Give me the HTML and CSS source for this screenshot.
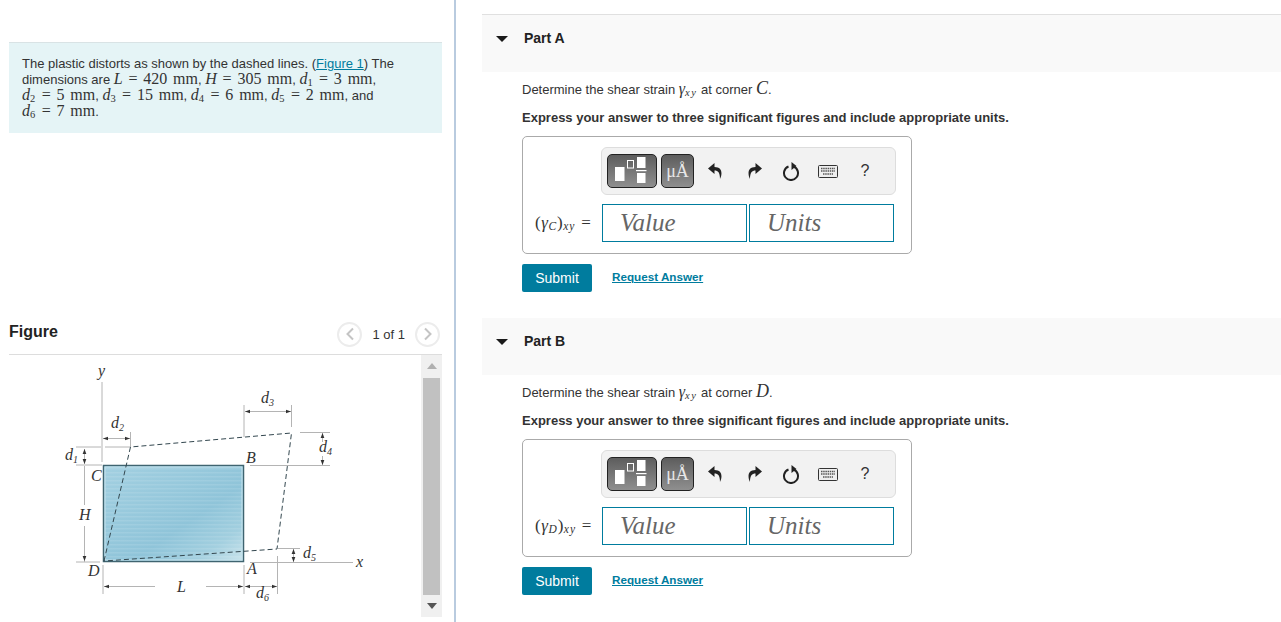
FILE: index.html
```html
<!DOCTYPE html>
<html lang="en">
<head>
<meta charset="utf-8">
<title>Shear strain problem</title>
<link rel="stylesheet" href="styles.css">
</head>
<body>
<div class="page">
  <section class="left">
    <div class="intro">The plastic distorts as shown by the dashed lines. (<a href="#">Figure 1</a>) The<br>dimensions are <span class="m"><i>L</i> = 420 mm</span>, <span class="m"><i>H</i> = 305 mm</span>, <span class="m"><i>d</i><sub>1</sub> = 3 mm</span>,<br><span class="m"><i>d</i><sub>2</sub> = 5 mm</span>, <span class="m"><i>d</i><sub>3</sub> = 15 mm</span>, <span class="m"><i>d</i><sub>4</sub> = 6 mm</span>, <span class="m"><i>d</i><sub>5</sub> = 2 mm</span>, and<br><span class="m"><i>d</i><sub>6</sub> = 7 mm</span>.</div>
    <div class="fig-head">
      <h2>Figure</h2>
      <div class="pager">
        <span class="pg"><svg width="10" height="14" viewBox="0 0 10 14"><path d="M8 1.500 2.500 7 8 12.500" fill="none" stroke="#c4c4c4" stroke-width="2"/></svg></span>
        <span class="pg-text">1 of 1</span>
        <span class="pg"><svg width="10" height="14" viewBox="0 0 10 14"><path d="M2 1.500 7.500 7 2 12.500" fill="none" stroke="#c4c4c4" stroke-width="2"/></svg></span>
      </div>
    </div>
    <div class="fig-body">
      <svg class="figure" width="412" height="267" viewBox="9 355 412 267">
        <defs>
          <linearGradient id="plate" x1="0" y1="0" x2="1" y2="1">
            <stop offset="0" stop-color="#a3d0e1"/>
            <stop offset=".6" stop-color="#8fc4d9"/>
            <stop offset=".82" stop-color="#a2cfdf"/>
            <stop offset="1" stop-color="#cbe4ec"/>
          </linearGradient>
          <pattern id="stripes" width="4" height="4" patternUnits="userSpaceOnUse"><rect width="4" height="1.500" fill="#fff" opacity=".1"/></pattern>
          <marker id="ar" viewBox="0 0 6 6" refX="6" refY="3" markerWidth="5" markerHeight="5" markerUnits="userSpaceOnUse" orient="auto-start-reverse"><path d="M0 .8 6 3 0 5.200z" fill="#333"/></marker>
        </defs>
        <rect x="103.500" y="465.500" width="140" height="96" fill="url(#plate)" stroke="#3f6470" stroke-width="1.500"/>
        <rect x="105" y="467" width="137" height="93" fill="url(#stripes)" stroke="#c5e2ec" stroke-width="1"/>
        <g class="thin">
          <path d="M102 382V462M76 447H101M105 447H130M76 465H102M76 562H100M84.500 466V505M84.500 526V562"/>
          <path d="M130.500 432V447M103 565V594M244 565V594M277.500 556V594M244 405V437M291.500 405V427M300 432.500H330M250 465.500H330M278 548.500H300M250 562.500H353"/>
          <path marker-start="url(#ar)" marker-end="url(#ar)" d="M103 438.500H130"/>
          <path marker-end="url(#ar)" d="M84.500 456V449"/>
          <path marker-end="url(#ar)" d="M84.500 456V464"/>
          <path marker-end="url(#ar)" d="M84.500 545V561"/>
          <path marker-end="url(#ar)" d="M155 586.500H104"/>
          <path marker-end="url(#ar)" d="M206 586.500H243"/>
          <path marker-start="url(#ar)" marker-end="url(#ar)" d="M245 586.500H277"/>
          <path marker-start="url(#ar)" marker-end="url(#ar)" d="M245 411.500H291"/>
          <path marker-end="url(#ar)" d="M322.500 442V433"/>
          <path marker-end="url(#ar)" d="M322.500 456V465"/>
          <path marker-start="url(#ar)" marker-end="url(#ar)" d="M293.500 549V562"/>
        </g>
        <path class="dash" d="M104 561 130.500 447 291.500 433 277 549Z"/>
        <g class="lab">
          <text x="98" y="376">y</text>
          <text x="111" y="428">d<tspan class="s" dy="3">2</tspan></text>
          <text x="65" y="460">d<tspan class="s" dy="3">1</tspan></text>
          <text x="91" y="481">C</text>
          <text x="79" y="520">H</text>
          <text x="88" y="576">D</text>
          <text x="177" y="592">L</text>
          <text x="261" y="403">d<tspan class="s" dy="3">3</tspan></text>
          <text x="319" y="452">d<tspan class="s" dy="3">4</tspan></text>
          <text x="246" y="463">B</text>
          <text x="303" y="558">d<tspan class="s" dy="3">5</tspan></text>
          <text x="247" y="574">A</text>
          <text x="256" y="598">d<tspan class="s" dy="3">6</tspan></text>
          <text x="356" y="567">x</text>
        </g>
      </svg>
      <div class="scroll">
        <span class="sc-btn"><svg width="12" height="6" viewBox="0 0 12 6"><path d="M1 6 6 0l5 6z" fill="#b0b0b0"/></svg></span>
        <span class="thumb"></span>
        <span class="sc-btn"><svg width="12" height="6" viewBox="0 0 12 6"><path d="M1 0h10L6 6z" fill="#555"/></svg></span>
      </div>
    </div>
  </section>
  <main class="right">
    <article class="part">
      <header class="part-head first"><svg width="12" height="6" viewBox="0 0 12 6"><path d="M0 0h12L6 6z" fill="#1a1a1a"/></svg><h3>Part A</h3></header>
      <div class="part-body">
        <p class="q">Determine the shear strain <span class="m"><i>γ</i><sub><i>xy</i></sub></span> at corner <span class="m big"><i>C</i></span>.</p>
        <p class="ex">Express your answer to three significant figures and include appropriate units.</p>
        <div class="answer">
          <div class="tools">
            <span class="tb tb-wide"><svg width="36" height="30" viewBox="0 0 36 30"><rect x="1" y="11" width="9.500" height="14" fill="#fff"/><rect x="13.500" y="4.500" width="6" height="7.500" fill="none" stroke="#fff"/><rect x="23" y="1" width="8.500" height="11" fill="#fff"/><rect x="22" y="14" width="10.500" height="1.200" fill="#fff"/><rect x="23" y="17" width="8.500" height="10" fill="#fff"/></svg></span>
            <span class="tb tb-unit">μÅ</span>
            <span class="ic ic-undo"><svg width="14" height="16" viewBox="0 0 14 16"><path d="M6.500 0 0 5.500 6.500 11V7.500c3.500 0 5.500 2 5.500 8.500 2.500-5 2.500-12-5.500-12z" fill="#222"/></svg></span>
            <span class="ic ic-redo"><svg width="14" height="16" viewBox="0 0 14 16"><path d="M7.500 0 14 5.500 7.500 11V7.500c-3.500 0-5.500 2-5.500 8.500C-.5 11-.5 4 7.500 4z" fill="#222"/></svg></span>
            <span class="ic ic-reload"><svg width="18" height="20" viewBox="0 0 18 20"><path d="M6.500 5.500a7 7 0 1 0 5 0" fill="none" stroke="#222" stroke-width="2"/><path d="M9.500 1v8l5-4z" fill="#222"/></svg></span>
            <span class="ic ic-keys"><svg width="20" height="13" viewBox="0 0 20 13"><rect x=".5" y=".5" width="19" height="12" rx="1" fill="#eee" stroke="#333"/><path d="M3 3.500h14M3 6h14M5 9h10" stroke="#555" stroke-width="1.500" stroke-dasharray="1.500 .7"/></svg></span>
            <span class="ic ic-help">?</span>
          </div>
          <div class="inputs">
            <span class="lbl m">(<i>γ</i><sub><i>C</i></sub>)<sub><i>xy</i></sub> =</span>
            <span class="field">Value</span>
            <span class="field">Units</span>
          </div>
        </div>
        <div class="actions"><button class="submit" type="button">Submit</button><a class="req" href="#">Request Answer</a></div>
      </div>
    </article>
    <article class="part">
      <header class="part-head"><svg width="12" height="6" viewBox="0 0 12 6"><path d="M0 0h12L6 6z" fill="#1a1a1a"/></svg><h3>Part B</h3></header>
      <div class="part-body">
        <p class="q">Determine the shear strain <span class="m"><i>γ</i><sub><i>xy</i></sub></span> at corner <span class="m big"><i>D</i></span>.</p>
        <p class="ex">Express your answer to three significant figures and include appropriate units.</p>
        <div class="answer">
          <div class="tools">
            <span class="tb tb-wide"><svg width="36" height="30" viewBox="0 0 36 30"><rect x="1" y="11" width="9.500" height="14" fill="#fff"/><rect x="13.500" y="4.500" width="6" height="7.500" fill="none" stroke="#fff"/><rect x="23" y="1" width="8.500" height="11" fill="#fff"/><rect x="22" y="14" width="10.500" height="1.200" fill="#fff"/><rect x="23" y="17" width="8.500" height="10" fill="#fff"/></svg></span>
            <span class="tb tb-unit">μÅ</span>
            <span class="ic ic-undo"><svg width="14" height="16" viewBox="0 0 14 16"><path d="M6.500 0 0 5.500 6.500 11V7.500c3.500 0 5.500 2 5.500 8.500 2.500-5 2.500-12-5.500-12z" fill="#222"/></svg></span>
            <span class="ic ic-redo"><svg width="14" height="16" viewBox="0 0 14 16"><path d="M7.500 0 14 5.500 7.500 11V7.500c-3.500 0-5.500 2-5.500 8.500C-.5 11-.5 4 7.500 4z" fill="#222"/></svg></span>
            <span class="ic ic-reload"><svg width="18" height="20" viewBox="0 0 18 20"><path d="M6.500 5.500a7 7 0 1 0 5 0" fill="none" stroke="#222" stroke-width="2"/><path d="M9.500 1v8l5-4z" fill="#222"/></svg></span>
            <span class="ic ic-keys"><svg width="20" height="13" viewBox="0 0 20 13"><rect x=".5" y=".5" width="19" height="12" rx="1" fill="#eee" stroke="#333"/><path d="M3 3.500h14M3 6h14M5 9h10" stroke="#555" stroke-width="1.500" stroke-dasharray="1.500 .7"/></svg></span>
            <span class="ic ic-help">?</span>
          </div>
          <div class="inputs">
            <span class="lbl m">(<i>γ</i><sub><i>D</i></sub>)<sub><i>xy</i></sub> =</span>
            <span class="field">Value</span>
            <span class="field">Units</span>
          </div>
        </div>
        <div class="actions"><button class="submit" type="button">Submit</button><a class="req" href="#">Request Answer</a></div>
      </div>
    </article>
  </main>
</div>
</body>
</html>
```
FILE: styles.css
```css
* { box-sizing: border-box; }
html, body { margin: 0; height: 100%; overflow: hidden; background: #fff; }
body { font-family: "Liberation Sans", Arial, sans-serif; font-size: 13px; color: #333; }
.page { display: flex; height: 622px; }
.left { width: 456px; flex: none; padding: 42px 0 0 9px; border-right: 2px solid #b9cbdf; }
.intro { width: 433px; height: 91px; padding: 13px 14px 0 13px; background: #e5f4f6; border-top: 1px solid #d9e3e5; line-height: 16px; color: #333; white-space: nowrap; }
.intro a { color: #007c9e; text-decoration: underline; }
.m { font-family: "Liberation Serif", serif; font-size: 16px; line-height: 14px; word-spacing: 1.800px; color: #333; }
.m sub { font-size: 10.500px; line-height: 0; vertical-align: -2px; letter-spacing: .6px; }
.fig-head { width: 433px; height: 37px; margin-top: 185px; border-bottom: 1px solid #ddd; display: flex; align-items: center; justify-content: space-between; }
.fig-head h2 { margin: 0 0 9px; font-size: 16px; font-weight: 700; color: #222; }
.pager { display: flex; align-items: center; gap: 10px; margin-right: 2px; margin-bottom: 4px; }
.pg { width: 25px; height: 25px; border: 2px solid #ececec; border-radius: 50%; display: flex; align-items: center; justify-content: center; }
.pg-text { font-size: 13px; color: #333; }
.fig-body { display: flex; width: 433px; }
.figure { flex: none; display: block; }
.thin path { fill: none; stroke: #b4b4b4; stroke-width: 1; }
.dash { fill: none; stroke: #33474f; stroke-width: 1; stroke-dasharray: 5 3; }
.lab text { font-family: "Liberation Serif", serif; font-style: italic; font-size: 16px; fill: #333; }
.lab .s { font-size: 10px; }
.scroll { width: 21px; height: 262px; background: #f0f0f0; display: flex; flex-direction: column; align-items: center; }
.sc-btn { flex: 1; min-height: 21px; display: flex; align-items: center; justify-content: center; }
.thumb { flex: none; height: 217px; width: 17px; background: #c1c1c1; }
.right { flex: 1; min-width: 0; padding: 14px 0 0 26px; }
.part-head { height: 57px; background: #f9f9f9; display: flex; align-items: flex-start; padding: 15px 0 0 14px; gap: 16px; }
.part-head.first { height: 58px; border-top: 1px solid #e0e0e0; }
.part-head svg { margin-top: 6px; }
.part-head h3 { margin: 0; font-size: 14px; font-weight: 700; color: #222; line-height: 16px; }
.part-body { padding: 8px 0 0 40px; height: 246px; }
.q { margin: 0; height: 20px; line-height: 20px; white-space: nowrap; }
.q sub { letter-spacing: 1.500px; }
.big { font-size: 18px; }
.ex { margin: 8px 0 0; height: 20px; line-height: 20px; font-weight: 700; white-space: nowrap; }
.answer { width: 390px; height: 118px; margin-top: 8px; border: 1px solid #aaa; border-radius: 5px; padding: 10px 17px 0 12px; }
.tools { width: 295px; height: 48px; margin-left: 66px; background: #f2f2f2; border: 1px solid #ddd; border-radius: 6px; display: flex; align-items: center; padding: 0 5px; }
.tb { height: 34px; border: 1px solid #222; border-radius: 5px; background: linear-gradient(#5d5d5d, #8f8f8f); display: flex; align-items: center; justify-content: center; color: #e8e8e8; }
.tb-wide { width: 50px; }
.tb-unit { width: 33px; margin-left: 4px; font-family: "Liberation Serif", serif; font-size: 18px; }
.ic { display: flex; justify-content: center; align-items: center; flex: none; }
.ic-undo { width: 42px; }
.ic-redo { width: 38px; }
.ic-reload { width: 34px; }
.ic-keys { width: 40px; }
.ic-help { width: 34px; font-size: 16px; color: #333; }
.inputs { display: flex; align-items: center; height: 38px; margin-top: 9px; }
.lbl { width: 67px; flex: none; font-size: 17px; word-spacing: 1px; letter-spacing: .5px; white-space: nowrap; }
.lbl sub { font-size: 11.500px; letter-spacing: 1px; }
.field { flex: none; width: 145px; height: 38px; margin-right: 2px; border: 1px solid #007c9e; padding-left: 17px; font-family: "Liberation Serif", serif; font-style: italic; font-size: 25px; line-height: 36px; color: #666; }
.actions { display: flex; align-items: center; margin-top: 10px; gap: 20px; }
.submit { width: 70px; height: 28px; border: 0; border-radius: 2px; background: #007c9e; color: #fff; font: 14px "Liberation Sans", Arial, sans-serif; padding: 0; }
.req { margin-bottom: 3px; color: #007c9e; font-size: 11.700px; font-weight: 700; text-decoration: underline; }
```
